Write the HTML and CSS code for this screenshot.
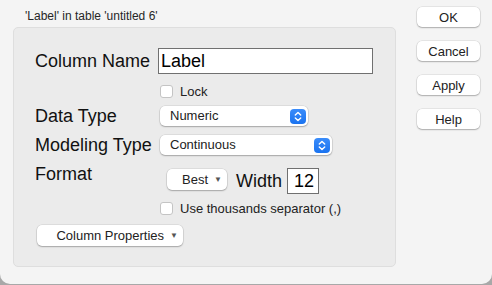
FILE: index.html
```html
<!DOCTYPE html>
<html lang="en">
<head>
  <meta charset="UTF-8">
  <meta name="viewport" content="width=device-width, initial-scale=1">
  <title>Column Info</title>
  <link rel="stylesheet" href="styles.css">
</head>
<body>
  <div class="window">
    <!-- Left side: caption + settings panel -->
    <div class="main">
      <div class="caption">'Label' in table 'untitled 6'</div>
      <div class="panel">
        <div class="row row-name">
          <span class="label">Column Name</span>
          <div class="text-field name-field">Label</div>
        </div>
        <div class="row row-lock">
          <span class="label"></span>
          <label class="check"><span class="box"></span>Lock</label>
        </div>
        <div class="row row-type">
          <span class="label">Data Type</span>
          <div class="popup stepper-popup type-popup">
            Numeric
            <span class="stepper">
              <svg width="16" height="15" viewBox="0 0 16 15"><path d="M5.3 6 L8 3.4 L10.7 6 M5.3 9 L8 11.6 L10.7 9" fill="none" stroke="#fff" stroke-width="1.4" stroke-linecap="round" stroke-linejoin="round"/></svg>
            </span>
          </div>
        </div>
        <div class="row row-model">
          <span class="label">Modeling Type</span>
          <div class="popup stepper-popup model-popup">
            Continuous
            <span class="stepper">
              <svg width="16" height="15" viewBox="0 0 16 15"><path d="M5.3 6 L8 3.4 L10.7 6 M5.3 9 L8 11.6 L10.7 9" fill="none" stroke="#fff" stroke-width="1.4" stroke-linecap="round" stroke-linejoin="round"/></svg>
            </span>
          </div>
        </div>
        <div class="row row-format">
          <span class="label format-label">Format</span>
          <div class="format-controls">
            <div class="popup menu-popup best-popup">Best<span class="arrow">&#9660;</span></div>
            <span class="width-label">Width</span>
            <div class="text-field width-field">12</div>
          </div>
        </div>
        <div class="row row-sep">
          <span class="label"></span>
          <label class="check"><span class="box"></span>Use thousands separator (,)</label>
        </div>
        <div class="props-row">
          <div class="popup menu-popup props-popup">Column Properties<span class="arrow">&#9660;</span></div>
        </div>
      </div>
    </div>

    <!-- Right side: dialog buttons -->
    <div class="actions">
      <button>OK</button>
      <button>Cancel</button>
      <button>Apply</button>
      <button>Help</button>
    </div>
  </div>
</body>
</html>
```

FILE: styles.css
```css
/* Base */
* { box-sizing: border-box; margin: 0; padding: 0; }
html, body {
  background: #a8a8a8;
}
body {
  font-family: 'Helvetica Neue', 'Liberation Sans', Arial, sans-serif;
  color: #1d1d1d;
  width: 492px;
  height: 285px;
  overflow: hidden;
}
.window {
  display: flex;
  width: 492px;
  height: 284px;
  background: #f4f4f4;
  border-radius: 0 0 10px 10px;
}

/* Left column */
.main {
  padding-left: 13px;
  width: 396px;
}
.caption {
  font-size: 12px;
  line-height: 13px;
  padding: 10px 0 0 12px;
  height: 27px;
  color: #262626;
}
.panel {
  height: 240px;
  background: #ebebeb;
  border: 1px solid #dedede;
  border-radius: 5px;
  padding: 20px 0 0 21px;
}

/* Rows */
.row {
  display: flex;
  align-items: center;
}
.label {
  width: 123px;
  flex: none;
  font-size: 18px;
  line-height: 20px;
  color: #111;
}
.row-name { height: 26px; }
.row-lock { margin-top: 10px; height: 14px; }
.row-type { margin-top: 8px; height: 20px; }
.row-model { margin-top: 9px; height: 20px; }
.row-format { margin-top: 13px; align-items: flex-start; }
.row-sep { margin-top: 7px; height: 14px; }
.props-row { margin-top: 10px; padding-left: 2px; }

/* Text fields */
.text-field {
  background: #fff;
  border: 1px solid #707070;
  font-size: 18px;
  color: #000;
}
.name-field {
  width: 215px;
  height: 26px;
  line-height: 24px;
  padding-left: 2px;
}
.width-field {
  width: 32px;
  height: 26px;
  line-height: 24px;
  text-align: right;
  padding-right: 4px;
}

/* Checkboxes */
.check {
  display: flex;
  align-items: center;
  gap: 7px;
  font-size: 13px;
  color: #222;
  margin-left: 2px;
}
.box {
  width: 13px;
  height: 13px;
  background: #fff;
  border: 1px solid #c4c4c4;
  border-radius: 3px;
}

/* Popup menus */
.popup {
  position: relative;
  background: #fff;
  border-radius: 5px;
  box-shadow: 0 0 0 0.5px rgba(0,0,0,0.12), 0 1px 1.5px rgba(0,0,0,0.25);
  font-size: 13px;
  color: #222;
}
.stepper-popup {
  height: 20px;
  line-height: 20px;
  padding-left: 10px;
  margin-left: 2px;
}
.type-popup { width: 148px; }
.model-popup { width: 172px; }
.stepper {
  position: absolute;
  right: 2px;
  top: 2.5px;
  width: 16px;
  height: 15px;
  border-radius: 4px;
  background: linear-gradient(#3a8cfa, #1a73f0);
}
.stepper svg { display: block; }
.menu-popup {
  display: flex;
  align-items: center;
  justify-content: flex-end;
  height: 21px;
}
.arrow {
  font-size: 8px;
  color: #555;
  margin-left: 6px;
  margin-right: 5px;
}

/* Format row */
.format-label { margin-top: -4px; }
.format-controls {
  display: flex;
  align-items: flex-start;
  gap: 9px;
}
.best-popup {
  width: 60px;
  margin-left: 9px;
  margin-top: 1px;
}
.width-label {
  font-size: 18px;
  line-height: 26px;
  color: #111;
  margin-right: -4px;
}
.props-popup {
  width: 146px;
}

/* Dialog buttons */
.actions {
  display: flex;
  flex-direction: column;
  gap: 14px;
  padding: 7px 0 0 21px;
}
.actions button {
  width: 63px;
  height: 20px;
  border: none;
  border-radius: 5px;
  background: #fff;
  box-shadow: 0 0 0 0.5px rgba(0,0,0,0.12), 0 1px 1.5px rgba(0,0,0,0.25);
  font-family: inherit;
  font-size: 13px;
  color: #222;
}
```
